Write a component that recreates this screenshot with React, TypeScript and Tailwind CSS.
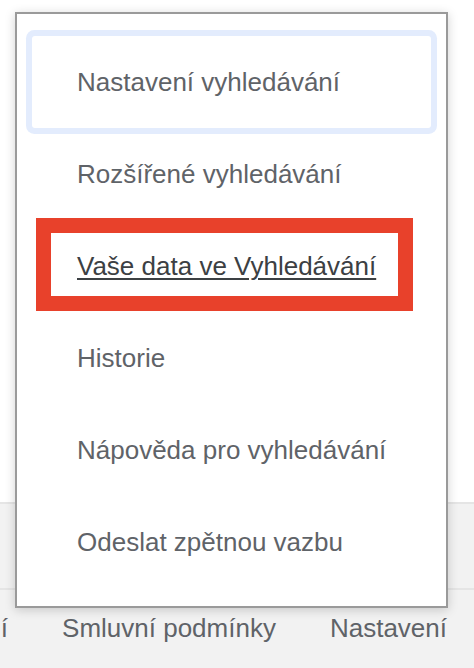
import React from "react";

const items = [
  "Nastavení vyhledávání",
  "Rozšířené vyhledávání",
  "Vaše data ve Vyhledávání",
  "Historie",
  "Nápověda pro vyhledávání",
  "Odeslat zpětnou vazbu",
];

export default function App() {
  return (
    <div
      className="relative w-[474px] h-[668px] overflow-hidden bg-white"
      style={{ fontFamily: '"Liberation Sans", Arial, sans-serif' }}
    >
      <div className="flex flex-col h-full">
        <div className="h-[502px] bg-white" />
        <div className="h-[86px] bg-[#f2f2f2] border-t-2 border-[#e5e5e5]" />
        <div className="flex-1 bg-[#f2f2f2] border-t-2 border-[#e5e5e5] overflow-hidden">
          <div className="flex justify-end gap-[54px] pr-[27px] pt-[23px] whitespace-nowrap text-[26px] leading-[30px] text-[#5f6368]">
            <span>Soukromí</span>
            <span>Smluvní podmínky</span>
            <span>Nastavení</span>
          </div>
        </div>
      </div>

      <div className="absolute left-[15px] top-[12px] w-[433px] h-[596px] bg-white border-2 border-[#9a9a9a] shadow-[0_2px_10px_rgba(0,0,0,0.18)]">
        <div className="flex flex-col px-[15px] pt-[22px]">
          {items.map((t, i) => (
            <div
              key={t}
              className={
                "relative flex items-center h-[92px] pl-[45px] text-[26px] leading-[30px] whitespace-nowrap " +
                (i === 0
                  ? "rounded-[3px] ring-[6px] ring-[#e3ecfd] text-[#5f6368]"
                  : i === 2
                  ? "text-[#3c4043]"
                  : "text-[#5f6368]")
              }
            >
              {i === 2 ? (
                <>
                  <div className="absolute left-[4px] top-[-2px] w-[377px] h-[93px] border-[15px] border-[#e8412b]" />
                  <span className="relative underline underline-offset-[3px] decoration-[2px]">{t}</span>
                </>
              ) : (
                <span>{t}</span>
              )}
            </div>
          ))}
        </div>
      </div>
    </div>
  );
}
